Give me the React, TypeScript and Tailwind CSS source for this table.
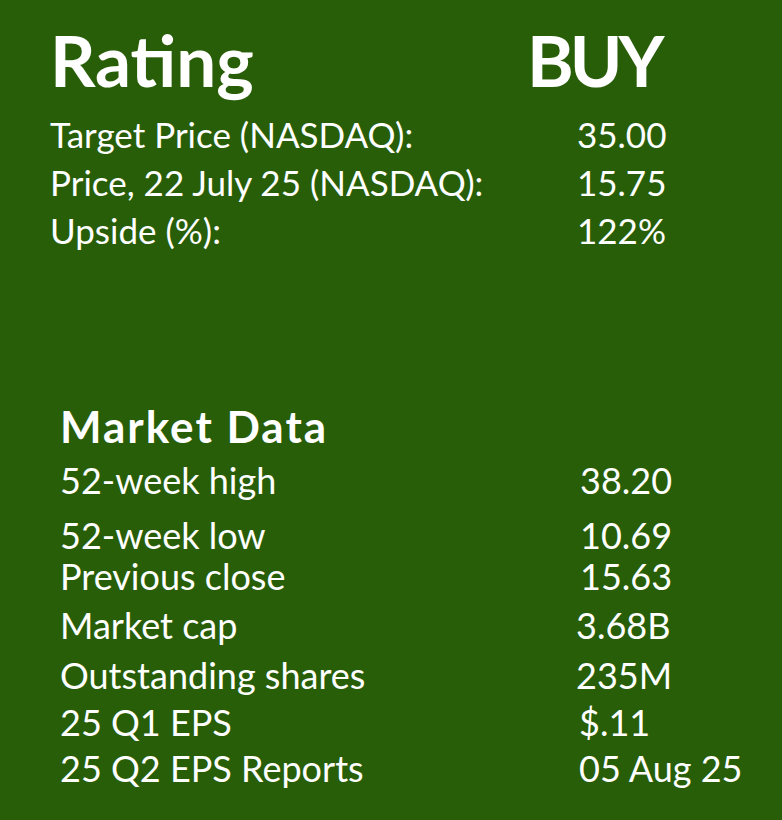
import React from 'react';

const topRows = [
  { label: 'Target Price (NASDAQ):', value: '35.00' },
  { label: 'Price, 22 July 25 (NASDAQ):', value: '15.75' },
  { label: 'Upside (%):', value: '122%' },
];

const marketRows = [
  { label: '52-week high', value: '38.20', gap: 'mt-[10px]', indent: 'w-[520px]' },
  { label: '52-week low', value: '10.69', gap: 'mt-[14px]', indent: 'w-[520px]' },
  { label: 'Previous close', value: '15.63', gap: 'mt-0', indent: 'w-[520px]' },
  { label: 'Market cap', value: '3.68B', gap: 'mt-[8px]', indent: 'w-[516px]' },
  { label: 'Outstanding shares', value: '235M', gap: 'mt-[9px]', indent: 'w-[516px]' },
  { label: '25 Q1 EPS', value: '$.11', gap: 'mt-[6px]', indent: 'w-[519px]' },
  { label: '25 Q2 EPS Reports', value: '05 Aug 25', gap: 'mt-[5px]', indent: 'w-[519px]' },
];

export default function App() {
  return (
    <div className="w-[782px] h-[820px] bg-[#285e08] text-white font-['Lato',sans-serif] overflow-hidden pt-[16px]">
      <div className="pl-[50px]">
        <div className="flex font-bold text-[71px] leading-[88px]">
          <span className="w-[477px]">Rating</span>
          <span className="tracking-[-4px]">BUY</span>
        </div>
        <div className="mt-[6px]">
          {topRows.map((r) => (
            <div key={r.label} className="flex text-[35px] leading-[48px]">
              <span className="w-[527px]">{r.label}</span>
              <span>{r.value}</span>
            </div>
          ))}
        </div>
      </div>

      <div className="pl-[60px] mt-[148px]">
        <h2 className="font-bold text-[44px] leading-[48px] tracking-[2px]">Market Data</h2>
        {marketRows.map((r) => (
          <div key={r.label} className={`flex text-[36px] leading-[41px] ${r.gap}`}>
            <span className={r.indent}>{r.label}</span>
            <span>{r.value}</span>
          </div>
        ))}
      </div>
    </div>
  );
}
